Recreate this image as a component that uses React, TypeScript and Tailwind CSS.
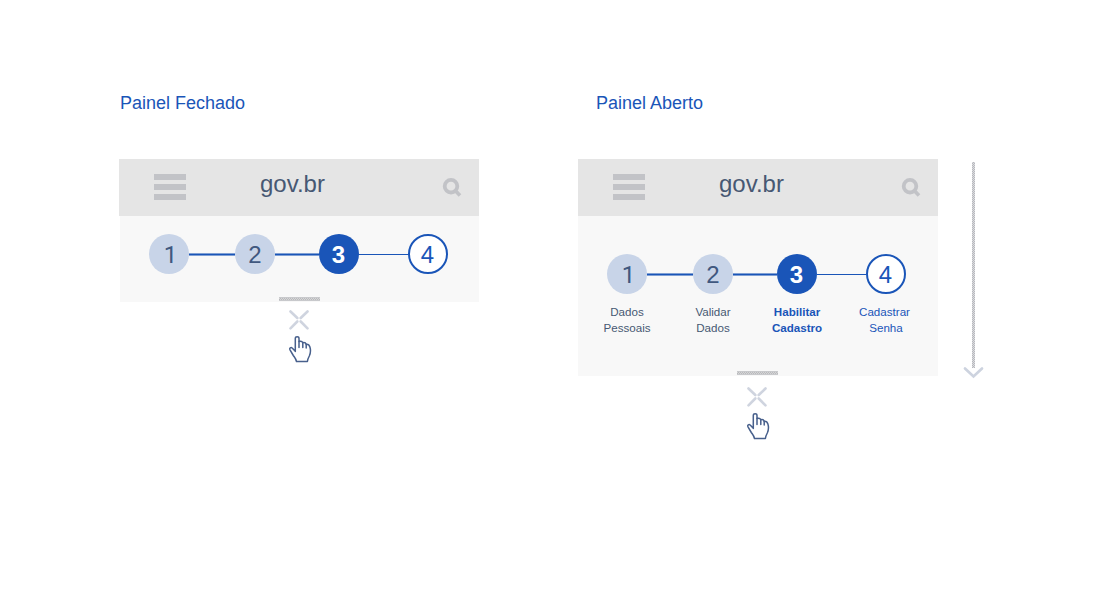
import React from "react";
import clsx from "clsx";

type StepState = "done" | "current" | "next";

interface Step {
  number: number;
  state: StepState;
  lines: [string, string];
}

const steps: Step[] = [
  { number: 1, state: "done", lines: ["Dados", "Pessoais"] },
  { number: 2, state: "done", lines: ["Validar", "Dados"] },
  { number: 3, state: "current", lines: ["Habilitar", "Cadastro"] },
  { number: 4, state: "next", lines: ["Cadastrar", "Senha"] },
];

const circleStyle: Record<StepState, string> = {
  done: "bg-[#c8d4e8] text-[#40587f]",
  current: "bg-[#1a55b8] text-white font-bold",
  next: "bg-white text-[#1a55b8] border-2 border-[#1a55b8]",
};

const labelStyle: Record<StepState, string> = {
  done: "text-[#475873]",
  current: "text-[#1a55b8] font-bold",
  next: "text-[#1a55b8]",
};

const connectorStyle = [
  "w-[46px] h-[3px] mt-[19px] bg-[#1a55b8] border-y border-[#7f9fd3]",
  "w-[44px] h-[3px] mt-[19px] bg-[#1a55b8] border-y border-[#7f9fd3]",
  "w-[49px] h-px mt-[20px] bg-[#1a55b8]",
];

const labelShift = ["", "", "", "-ml-[3px]"];

const secondLineShift = ["", "", "", "pl-[3px]"];

const digitStyle = ["pl-[3px] font-['Roboto',sans-serif]", "", "-ml-px", "-ml-px"];

function Stepper({ open }: { open: boolean }) {
  return (
    <div className="flex items-start">
      {steps.map((step, i) => (
        <React.Fragment key={step.number}>
          <div className="flex w-10 shrink-0 flex-col items-center">
            <div
              className={clsx(
                "flex h-10 w-10 items-center justify-center rounded-full pt-[2px] text-[24px] leading-none",
                circleStyle[step.state],
              )}
            >
              <span className={digitStyle[i]}>{step.number}</span>
            </div>
            {open && (
              <div
                className={clsx(
                  "mt-[10px] whitespace-nowrap text-center text-[11.6px] leading-4",
                  labelStyle[step.state],
                  labelShift[i],
                )}
              >
                <div>{step.lines[0]}</div>
                <div className={secondLineShift[i]}>{step.lines[1]}</div>
              </div>
            )}
          </div>
          {i < steps.length - 1 && <div className={clsx("shrink-0", connectorStyle[i])} />}
        </React.Fragment>
      ))}
    </div>
  );
}

function Header() {
  return (
    <div className="flex h-[57px] w-[360px] bg-[#e5e5e5]">
      <div className="ml-[35px] mt-[15px] flex w-8 flex-col gap-1">
        <div className="h-[6px] bg-[#c2c3c7]" />
        <div className="h-[6px] bg-[#c2c3c7]" />
        <div className="h-[6px] bg-[#c2c3c7]" />
      </div>
      <div className="ml-[74px] mt-[11px] w-[67px] text-[24px] leading-7 text-[#475873]">gov.br</div>
      <svg className="ml-[115px] mt-[18px]" width="20" height="21" viewBox="0 0 20 21" fill="none" stroke="#c2c3c7">
        <circle cx="9" cy="9.2" r="6.3" strokeWidth="3.8" />
        <path d="M12.7 12.9L18 18.5" strokeWidth="3.6" />
      </svg>
    </div>
  );
}

function Handle() {
  return (
    <svg width="41" height="4" viewBox="0 0 41 4" shapeRendering="crispEdges">
      <defs>
        <pattern id="grip" width="2" height="2" patternUnits="userSpaceOnUse">
          <rect width="2" height="2" fill="#d6d6d7" />
          <rect width="1" height="1" fill="#b9babd" />
          <rect x="1" y="1" width="1" height="1" fill="#b9babd" />
        </pattern>
      </defs>
      <rect width="41" height="4" fill="url(#grip)" />
      <path d="M0 .5H41M0 3.5H41" stroke="#c8c9cc" />
    </svg>
  );
}

function CollapseIcon() {
  return (
    <svg width="20" height="20" viewBox="0 0 20 20" fill="none" stroke="#cfd4df" strokeWidth="2.6" strokeLinecap="round">
      <path d="M1.5 1.5L8.3 8M18.5 1.5L11.7 8M1.5 18.3L8.3 11.5M18.5 18.3L11.7 11.5" />
    </svg>
  );
}

function HandIcon() {
  return (
    <svg width="23" height="27" viewBox="0 0 23 27" fill="white" stroke="#48608c" strokeWidth="1.5" strokeLinejoin="round" strokeLinecap="round">
      <path d="M6.3 15.5V2.5C6.3 .2 10 .2 10 2.5V5.5C12 4.8 13.3 5.5 13.8 6.7C15.5 6.3 16.8 7 17.2 8.2C19 8 20.4 9.2 20.9 11C21.8 14 21.7 17 20.3 20C19.2 22 18.7 23 18.4 25.5H7.5C7 22.8 5.7 21.5 4.3 19.5L1 13.8C.1 11.8 2 11 3.4 12.2L6.3 15.3" />
      <path d="M10 5.5V11.5M13.8 6.7V11.5M17.2 8.2V12" />
    </svg>
  );
}

function DownArrow() {
  return (
    <svg width="21" height="218" viewBox="0 0 21 218">
      <defs>
        <pattern id="mesh" width="2" height="2" patternUnits="userSpaceOnUse">
          <rect width="2" height="2" fill="#dcdde0" />
          <rect width="1" height="1" fill="#b7b8bd" />
          <rect x="1" y="1" width="1" height="1" fill="#b7b8bd" />
        </pattern>
      </defs>
      <rect x="9" y="0" width="3" height="206" fill="url(#mesh)" shapeRendering="crispEdges" />
      <path d="M2 206.5L10.5 214.5L19 206.5" fill="none" stroke="#cdd3df" strokeWidth="2.7" strokeLinecap="round" />
    </svg>
  );
}

function Panel({ open }: { open: boolean }) {
  return (
    <div className="flex w-[360px] flex-col">
      <Header />
      <div
        className={clsx(
          "flex flex-col justify-between bg-[#f8f8f8] pb-px pl-[29px]",
          open ? "h-40 pt-[38px]" : "ml-px h-[86px] pt-[18px]",
        )}
      >
        <Stepper open={open} />
        <div className="ml-[130px] flex h-1">
          <Handle />
        </div>
      </div>
      <div className={clsx("flex flex-col gap-[6px]", open ? "ml-[169px] mt-[11px]" : "ml-[170px] mt-2")}>
        <CollapseIcon />
        <HandIcon />
      </div>
    </div>
  );
}

export default function App() {
  return (
    <main className="flex h-[598px] w-[1100px] bg-white pt-[92px] font-['Liberation_Sans',Arial,sans-serif]">
      <section className="ml-[119px] w-[360px]">
        <h2 className="ml-px h-[67px] text-[18px] leading-[22px] text-[#1a55b8]">Painel Fechado</h2>
        <Panel open={false} />
      </section>
      <section className="ml-[99px] w-[360px]">
        <h2 className="ml-[18px] h-[67px] text-[18px] leading-[22px] text-[#1a55b8]">Painel Aberto</h2>
        <Panel open />
      </section>
      <aside className="ml-[25px] mt-[70px]">
        <DownArrow />
      </aside>
    </main>
  );
}
